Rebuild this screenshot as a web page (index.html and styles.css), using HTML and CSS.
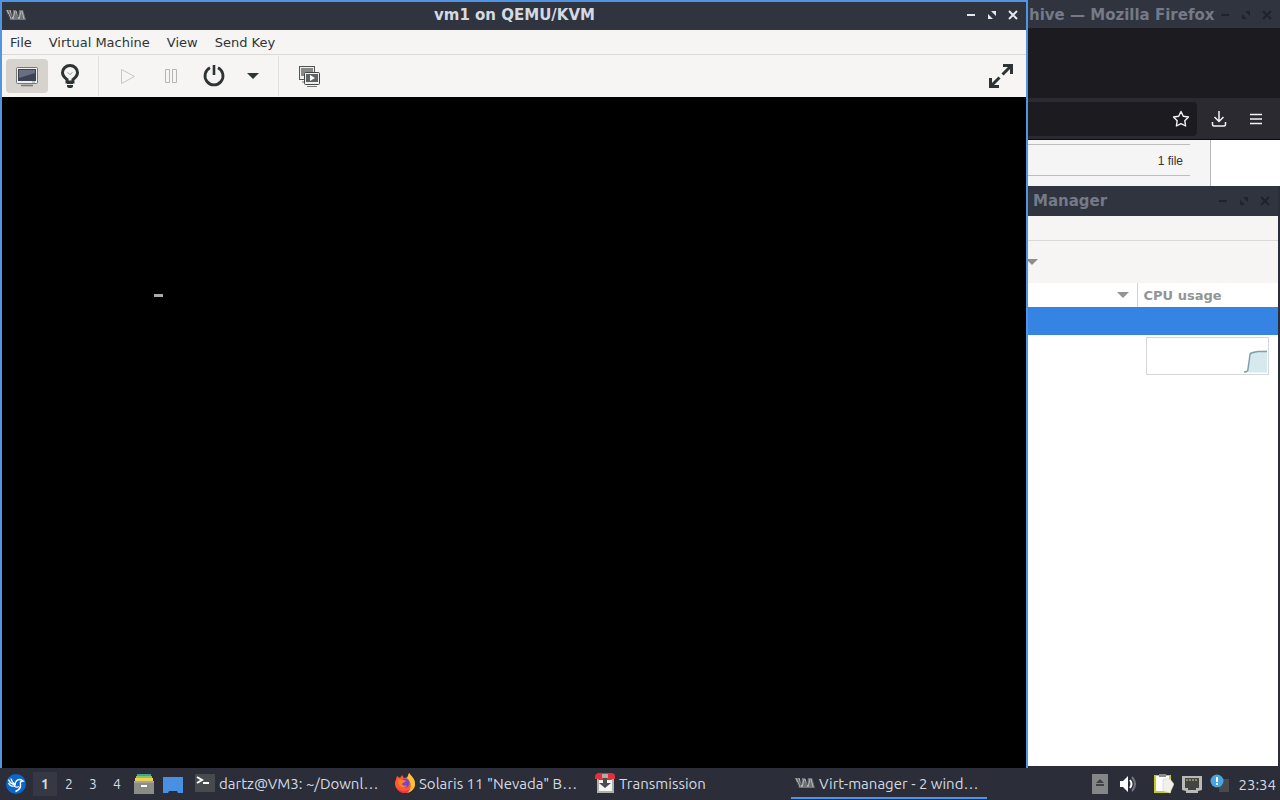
FILE: index.html
```html
<!DOCTYPE html>
<html lang="en">
<head>
    <meta charset="UTF-8">
    <meta name="viewport" content="width=device-width, initial-scale=1.0">
    <title>Desktop</title>
    <link rel="stylesheet" href="styles.css">
</head>
<body>
    <!-- Shared icons -->
    <svg class="sprite" aria-hidden="true">
        <symbol id="i-min" viewBox="0 0 12 12"><path d="M2 6h8" stroke="currentColor" stroke-width="2"/></symbol>
        <symbol id="i-max" viewBox="0 0 12 12"><path d="M5 2h5v5zM2 5v5h5z" fill="currentColor"/></symbol>
        <symbol id="i-close" viewBox="0 0 12 12"><path d="M2 2l8 8M10 2l-8 8" stroke="currentColor" stroke-width="2"/></symbol>
        <symbol id="i-virt" viewBox="0 0 20 12">
            <path d="M0 1h4l2 7 1-7h3l2 7 1-7h4l3 10H4z" fill="#6f7276"/>
            <path d="M1 1l4 9M4 1l3 9M9 2l-2 8M10 2l3 8M15 2l-2 8M16 2l2 8" stroke="#b9babc" fill="none"/>
            <path d="M6 3v5M12 3v5M2 5l2 5" stroke="#3b3d42"/>
        </symbol>
    </svg>

    <main class="desktop">
        <!-- Browser -->
        <section class="window firefox" aria-label="Mozilla Firefox">
            <header class="titlebar">
                <h2>hive — Mozilla Firefox</h2>
                <div class="win-buttons">
                    <button aria-label="Minimize"><svg><use href="#i-min"/></svg></button>
                    <button aria-label="Maximize"><svg><use href="#i-max"/></svg></button>
                    <button aria-label="Close"><svg><use href="#i-close"/></svg></button>
                </div>
            </header>
            <div class="tabstrip"></div>
            <div class="navbar">
                <div class="urlbar">
                    <button aria-label="Bookmark">
                        <svg class="ico18" viewBox="0 0 18 18"><path d="M9 1.500l2.300 4.700 5.200.8-3.700 3.700.8 5.300L9 13.600l-4.600 2.400.8-5.300L1.500 7l5.200-.8z" fill="none" stroke="currentColor" stroke-width="1.4" stroke-linejoin="round"/></svg>
                    </button>
                </div>
                <button aria-label="Downloads">
                    <svg class="ico18" viewBox="0 0 18 18"><path d="M9 1v10M4.500 7l4.500 4.500L13.500 7M2.500 12v2.500q0 1.500 1.500 1.500h10q1.500 0 1.500-1.500V12" fill="none" stroke="currentColor" stroke-width="1.500"/></svg>
                </button>
                <button aria-label="Menu">
                    <svg class="ico18" viewBox="0 0 18 18"><path d="M3 4.500h12M3 9h12M3 13.500h12" stroke="currentColor" stroke-width="1.400"/></svg>
                </button>
            </div>
            <div class="page">
                <div class="page-panel"><p>1 file</p></div>
            </div>
        </section>

        <!-- Virtual machine list -->
        <section class="window manager" aria-label="Manager">
            <header class="titlebar">
                <h2>Manager</h2>
                <div class="win-buttons">
                    <button aria-label="Minimize"><svg><use href="#i-min"/></svg></button>
                    <button aria-label="Maximize"><svg><use href="#i-max"/></svg></button>
                    <button aria-label="Close"><svg><use href="#i-close"/></svg></button>
                </div>
            </header>
            <div class="menubar"></div>
            <div class="manager-tools">
                <button aria-label="Shutdown options"><svg class="arrow" viewBox="0 0 12 6"><path d="M0 0h12L6 6z" fill="currentColor"/></svg></button>
            </div>
            <table>
                <thead>
                    <tr>
                        <th aria-label="Name"><svg class="arrow" viewBox="0 0 12 6"><path d="M0 0h12L6 6z" fill="currentColor"/></svg></th>
                        <th class="cpu">CPU usage</th>
                    </tr>
                </thead>
                <tbody>
                    <tr class="selected"><td></td><td></td></tr>
                    <tr>
                        <td></td>
                        <td class="graph-cell">
                            <svg class="graph" viewBox="0 0 121 35">
                                <path d="M98 34l3-1 3-18q0-2 3-2l13-1v22z" fill="#d5e9ee"/>
                                <path d="M97 33.500q4 0 4-3l2-14q0-2 3-2.500l5-1h9" fill="none" stroke="#7f9fac" stroke-width="1.500"/>
                            </svg>
                        </td>
                    </tr>
                </tbody>
            </table>
        </section>

        <!-- Active virtual machine window -->
        <section class="window vm" aria-label="vm1 on QEMU/KVM">
            <header class="titlebar">
                <svg class="virt"><use href="#i-virt"/></svg>
                <h1>vm1 on QEMU/KVM</h1>
                <div class="win-buttons">
                    <button aria-label="Minimize"><svg><use href="#i-min"/></svg></button>
                    <button aria-label="Maximize"><svg><use href="#i-max"/></svg></button>
                    <button aria-label="Close"><svg><use href="#i-close"/></svg></button>
                </div>
            </header>
            <nav class="menubar">
                <button>File</button>
                <button>Virtual Machine</button>
                <button>View</button>
                <button>Send Key</button>
            </nav>
            <div class="toolbar">
                <button class="tool pressed" aria-label="Console">
                    <svg class="ico24" viewBox="0 0 24 24">
                        <rect x="1.500" y="3.500" width="21" height="16" rx="1" fill="#eeeeec" stroke="#777"/>
                        <path d="M3 5h18v12H3z" fill="#3c4252"/>
                        <path d="M4 6h16v3L4 14z" fill="#686f82"/>
                        <path d="M9 20h6v1H9z" fill="#ccc"/>
                        <path d="M6 21.500h12" stroke="#777" stroke-width="1.500"/>
                        <path d="M17 18h3" stroke="#8a8"/>
                    </svg>
                </button>
                <button class="tool" aria-label="Details">
                    <svg class="ico24" viewBox="0 0 24 24">
                        <path d="M9 18v-2.500C6.500 13.500 4.500 12 4.500 8.500a7.500 7 0 0 1 15 0c0 3.500-2 5-4.500 7V18z" fill="none" stroke="#2e3436" stroke-width="3"/>
                        <path d="M9 18h6v2H9z" fill="#2e3436"/>
                        <path d="M9 21h6v1q0 2-3 2t-3-2z" fill="#2e3436"/>
                        <path d="M9.500 8.500l2.500 2 2.500-2" fill="none" stroke="#999"/>
                    </svg>
                </button>
                <span class="separator"></span>
                <button class="tool" disabled aria-label="Run"><svg class="ico24" viewBox="0 0 24 24"><path d="M5.500 5.500v14l13-7z" fill="none" stroke="#c6c7c5"/></svg></button>
                <button class="tool" disabled aria-label="Pause"><svg class="ico24" viewBox="0 0 24 24"><path d="M6.500 5.500h4v13h-4zM13.500 5.500h4v13h-4z" fill="none" stroke="#b4b6b3"/></svg></button>
                <button class="tool" aria-label="Shut down"><svg class="ico24" viewBox="0 0 24 24"><path d="M8 3.800a9 9 0 1 0 8 0" fill="none" stroke="#2e3436" stroke-width="2.800"/><path d="M12 1v10" stroke="#2e3436" stroke-width="2.600"/></svg></button>
                <button class="tool drop" aria-label="Shutdown options"><svg class="arrow" viewBox="0 0 12 6"><path d="M0 0h12L6 6z" fill="#2e3436"/></svg></button>
                <span class="separator"></span>
                <button class="tool snapshots" aria-label="Snapshots">
                    <svg class="ico24" viewBox="0 0 24 24">
                        <rect x="2.500" y="2.500" width="15" height="13" fill="#eee" stroke="#555"/>
                        <path d="M4 4h12v8H4z" fill="#858a88"/>
                        <path d="M5 18h4" stroke="#777"/>
                        <rect x="7.500" y="8.500" width="15" height="12" rx="1" fill="#eee" stroke="#444"/>
                        <path d="M9 10h12v8H9z" fill="#5d6265"/>
                        <path d="M13 11v6l5-3z" fill="#fff"/>
                        <path d="M10 22.500h10" stroke="#777"/>
                    </svg>
                </button>
                <button class="tool fullscreen" aria-label="Fullscreen">
                    <svg class="ico24" viewBox="0 0 24 24"><path d="M14 1.500h8.500V10M22 2l-8.500 8.500M1.500 14v8.500H10M2 22l8.500-8.500" fill="none" stroke="#2e3436" stroke-width="3"/></svg>
                </button>
            </div>
            <div class="screen"><span class="cursor"></span></div>
        </section>
    </main>

    <!-- Panel -->
    <footer class="panel">
        <button class="start" aria-label="Menu">
            <svg class="ico20" viewBox="0 0 20 20">
                <circle cx="10" cy="10" r="10" fill="#0b68c8"/>
                <path d="M2.500 5.500c1 3 3 4.500 6 5M5 4.500c.5 3 2 4.500 4.500 6M2.500 9c1 3 4 4 7 2.500" fill="none" stroke="#fff" stroke-width="1.300"/>
                <path d="M9 11c0-3 2-5.500 4.500-5.500 1.500 0 2.500.5 3.500 1.500-2.500 0-3 1.500-2.500 3.500.5 3.500-1.500 5.500-5 7" fill="none" stroke="#fff" stroke-width="1.500"/>
                <path d="M8 11.500c1 2 3 2 5 1" fill="none" stroke="#fff" stroke-width="1.300"/>
            </svg>
        </button>
        <nav class="workspaces">
            <button class="current">1</button>
            <button>2</button>
            <button>3</button>
            <button>4</button>
        </nav>
        <div class="launchers">
            <button aria-label="Files">
                <svg class="ico20" viewBox="0 0 20 20"><path d="M3 0h14v3H3z" fill="#35a6a0"/><path d="M2 2h16v5H2z" fill="#8cc653"/><path d="M1 4h18v5H1z" fill="#f1cf55"/><path d="M0 7h20v13H0z" fill="#8b8c87"/><path d="M0 7h20v2H0z" fill="#a2a39e"/><path d="M7 12h6" stroke="#fff" stroke-width="2"/></svg>
            </button>
            <button aria-label="Show desktop">
                <svg class="ico20" viewBox="0 0 20 20"><path d="M0 3h20v16h-5l-1-2H6l-1 2H0z" fill="#4a90e2"/></svg>
            </button>
        </div>
        <div class="tasks">
            <button>
                <svg class="ico20" viewBox="0 0 20 20"><rect y="1" width="20" height="18" rx="1" fill="#484b4e"/><path d="M2 4l5 3-5 3" fill="none" stroke="#fff" stroke-width="2"/><path d="M8 10h6" stroke="#fff" stroke-width="2"/></svg>
                <span>dartz@VM3: ~/Downl…</span>
            </button>
            <button>
                <svg class="ico20" viewBox="0 0 20 20">
                    <path d="M2 3l3 2 2-3 2 3 4-1 1-4c2 3 6 5 6 11a10 9 0 0 1-20 0c0-3 1-4 2-8z" fill="#ff5a2c"/>
                    <path d="M14 0c2 3 6 5 6 11 0 5-4 8-8 9 5-4 5-11 0-15z" fill="#ffc52e"/>
                    <path d="M1 13c2 5 9 7 14 3-1 3-4 4-6 4-4 0-7-3-8-7z" fill="#f32c60"/>
                    <circle cx="10" cy="10" r="4.500" fill="#7543d6"/>
                    <path d="M3 7c3-2 6 0 8 1-1 2-3 1-4 3 1 2 3 2 5 1-2 4-7 3-8-1z" fill="#ff8125"/>
                </svg>
                <span>Solaris 11 "Nevada" B…</span>
            </button>
            <button>
                <svg class="ico20" viewBox="0 0 20 20">
                    <path d="M2 5h17v15H2z" fill="#aeb0aa"/><path d="M4 7h13v11H4z" fill="#f5f5f4"/>
                    <path d="M0 6V3q1-3 4-3h12q4 0 4 3v3h-3l-1 1H4L3 6z" fill="#df303c"/>
                    <path d="M8 5h4v5h4l-6 5-6-5h4z" fill="#4c4d4c"/><path d="M7 1h6v4H7z" fill="#b5aaa3"/>
                </svg>
                <span>Transmission</span>
            </button>
            <button class="active">
                <svg class="virt"><use href="#i-virt"/></svg>
                <span>Virt-manager - 2 wind…</span>
            </button>
        </div>
        <div class="tray">
            <button aria-label="Removable media">
                <svg class="ico20" viewBox="0 0 20 20"><path d="M2 0h16v20H2z" fill="#858688"/><path d="M6 9l4-4 4 4zM6 10h8v2H6z" fill="#3f4146"/></svg>
            </button>
            <button class="volume" aria-label="Volume">
                <svg class="ico20" viewBox="0 0 20 20"><path d="M2 7h3l5-5v16l-5-5H2z" fill="#fff"/><path d="M12 6q3 4 0 8" fill="none" stroke="#fff" stroke-width="2"/><path d="M14 3q6 7 0 14" fill="none" stroke="#73767f" stroke-width="2"/></svg>
            </button>
            <button aria-label="Clipboard">
                <svg class="ico20" viewBox="0 0 20 20"><path d="M0 1h17v18H0z" fill="#c9c922"/><path d="M2 2h13v15H2z" fill="#fff"/><path d="M5 0h7v3H5z" fill="#8b8d86"/><path d="M9 5h7l4 5-4 9-7-2z" fill="#f1f0ea" stroke="#c8c7bd" stroke-width=".5"/></svg>
            </button>
            <button aria-label="Network">
                <svg class="ico20" viewBox="0 0 20 20"><path d="M0 2h20v14l-4 1v2H4v-2l-4-1z" fill="#b9bab8"/><path d="M3 4h14v10h-3v2H6v-2H3z" fill="#444540"/><path d="M5 5v2M8 5v2M11 5v2M14 5v2" stroke="#d5cf9c"/></svg>
            </button>
            <button aria-label="Updates">
                <svg class="ico20" viewBox="0 0 20 20"><path d="M9 5h10v13H9z" fill="#474b50"/><circle cx="7" cy="7" r="6.500" fill="#4aa5df"/><path d="M7 3v5M7 9v2" stroke="#fff" stroke-width="2"/></svg>
            </button>
            <time>23:34</time>
        </div>
    </footer>
</body>
</html>
```
FILE: styles.css
```css
/* General styles */
* {
    box-sizing: border-box;
}

body {
    margin: 0;
    height: 100vh;
    display: flex;
    flex-direction: column;
    background-color: #2b2e38;
    color: #2e3436;
    font-family: "DejaVu Sans", sans-serif;
    font-size: 13px;
    overflow: hidden;
}

button {
    display: flex;
    align-items: center;
    justify-content: center;
    padding: 0;
    border: none;
    background: none;
    color: inherit;
    font: inherit;
}

svg {
    display: block;
    flex: none;
}

h1, h2, p {
    margin: 0;
}

.sprite {
    display: none;
}

.ico18 {
    width: 18px;
    height: 18px;
}

.ico20 {
    width: 20px;
    height: 20px;
}

.ico24 {
    width: 24px;
    height: 24px;
}

.arrow {
    width: 12px;
    height: 6px;
}

.virt {
    width: 20px;
    height: 12px;
}

/* Windows */
.desktop {
    position: relative;
    flex: 1;
}

.window {
    position: absolute;
    display: flex;
    flex-direction: column;
    overflow: hidden;
}

.titlebar {
    display: flex;
    align-items: center;
    justify-content: space-between;
    height: 30px;
    background-color: #2f343f;
    color: #1f232c;
}

.titlebar h1,
.titlebar h2 {
    font-size: 15px;
    line-height: 26px;
    font-weight: bold;
    white-space: nowrap;
}

.titlebar h2 {
    color: #747a88;
}

.win-buttons {
    display: flex;
}

.win-buttons button {
    width: 21px;
    height: 24px;
}

.win-buttons svg {
    width: 12px;
    height: 12px;
}

.menubar {
    display: flex;
    gap: 1px;
    height: 25px;
    background-color: #f6f5f4;
    border-bottom: 1px solid #dad9d7;
}

.menubar button {
    padding: 0 8px;
}

/* Browser window */
.firefox {
    top: 0;
    right: 0;
    width: 252px;
    height: 190px;
    background-color: #fff;
}

.firefox .titlebar {
    height: 28px;
    padding: 2px 3px 0 1px;
}

.tabstrip {
    height: 70px;
    background-color: #1c1b20;
}

.navbar {
    display: flex;
    align-items: center;
    height: 42px;
    padding-right: 6px;
    background-color: #2b2a31;
    border-bottom: 1px solid #0c0c0e;
    color: #f4f4f6;
}

.navbar button {
    width: 37px;
    height: 32px;
}

.urlbar {
    display: flex;
    flex: 1;
    justify-content: flex-end;
    margin-right: 3px;
    background-color: #1c1b20;
    border-radius: 0 4px 4px 0;
}

.urlbar button {
    width: 32px;
    height: 34px;
}

.page {
    display: flex;
    flex: 1;
}

.page-panel {
    width: 183px;
    padding: 4px 20px 0 0;
    background-color: #f5f5f5;
    border-right: 1px solid #b8b8b8;
}

.page-panel p {
    padding: 3px 7px 0 0;
    border: solid #bdbdbd;
    border-width: 1px 0;
    color: #333;
    font-family: "Liberation Sans", Arial, sans-serif;
    font-size: 12px;
    line-height: 27px;
    text-align: right;
}

/* Manager window */
.manager {
    top: 186px;
    right: 0;
    bottom: 2px;
    width: 252px;
    background-color: #fff;
    border-right: 2px solid #2b2e38;
}

.manager .titlebar {
    padding: 0 3px 0 5px;
}

.manager-tools {
    display: flex;
    height: 42px;
    background-color: #f6f5f4;
    color: #8b8e8f;
}

.manager-tools button {
    width: 10px;
    justify-content: flex-end;
}

.manager table {
    width: 100%;
    border-collapse: collapse;
    table-layout: fixed;
}

.manager th {
    height: 24px;
    padding: 0 8px 0 0;
    color: #929595;
}

.manager th .arrow {
    margin-left: auto;
}

.manager .cpu {
    width: 141px;
    padding: 0 0 0 6px;
    border-left: 1px solid #d5d3d0;
    text-align: left;
}

.manager td {
    padding: 0;
}

.selected {
    height: 28px;
    background-color: #3584e4;
}

.manager .graph-cell {
    padding: 2px 9px 2px 9px;
}

.graph {
    width: 100%;
    height: 38px;
    border: 1px solid #d5d8d8;
}

/* Virtual machine window */
.vm {
    top: 0;
    left: 0;
    right: 252px;
    bottom: 0;
    border: 2px solid #5294e2;
    border-bottom: none;
    background-color: #000;
}

.vm .titlebar {
    display: grid;
    grid-template-columns: 1fr auto 1fr;
    height: 28px;
    padding: 0 3px 2px 4px;
    color: #e4e7ed;
}

.vm .titlebar h1 {
    color: #d3dae3;
}

.vm .win-buttons {
    justify-self: end;
}

.toolbar {
    display: flex;
    align-items: center;
    height: 42px;
    padding: 0 4px;
    background-color: #f6f5f4;
}

.tool {
    width: 43px;
    height: 34px;
}

.pressed {
    width: 42px;
    background-color: #d6d2cd;
    border-radius: 4px;
}

.drop {
    width: 36px;
}

.separator {
    width: 1px;
    height: 40px;
    margin: 0 7px;
    background-color: #e1dfdc;
}

.snapshots {
    width: 46px;
}

.fullscreen {
    margin-left: auto;
}

.screen {
    flex: 1;
    padding: 197px 152px;
    background-color: #000;
}

.cursor {
    display: block;
    width: 9px;
    height: 3px;
    background-color: #aaa;
}

/* Panel */
.panel {
    display: flex;
    align-items: center;
    height: 32px;
    padding: 0 4px 0 6px;
    background-color: #2b2e38;
    color: #d3dae3;
    font-family: Ubuntu, "Noto Sans", sans-serif;
    font-size: 15px;
}

.workspaces {
    display: flex;
    margin-left: 7px;
    font-size: 14px;
}

.workspaces button {
    width: 24px;
    height: 24px;
}

.workspaces .current {
    background-color: #353943;
    font-weight: bold;
}

.launchers {
    display: flex;
    gap: 9px;
    margin-left: 5px;
}

.tasks {
    display: flex;
    flex: 1;
    gap: 4px;
    min-width: 0;
    margin-left: 8px;
}

.tasks button {
    flex: 0 1 196px;
    justify-content: flex-start;
    gap: 4px;
    min-width: 0;
    height: 30px;
    padding: 0 4px;
    border-bottom: 2px solid transparent;
    white-space: nowrap;
}

.tasks .active {
    border-bottom-color: #5294e2;
}

.tray {
    display: flex;
    align-items: center;
    gap: 8px;
}

.tray .volume {
    margin-right: 8px;
}
```
